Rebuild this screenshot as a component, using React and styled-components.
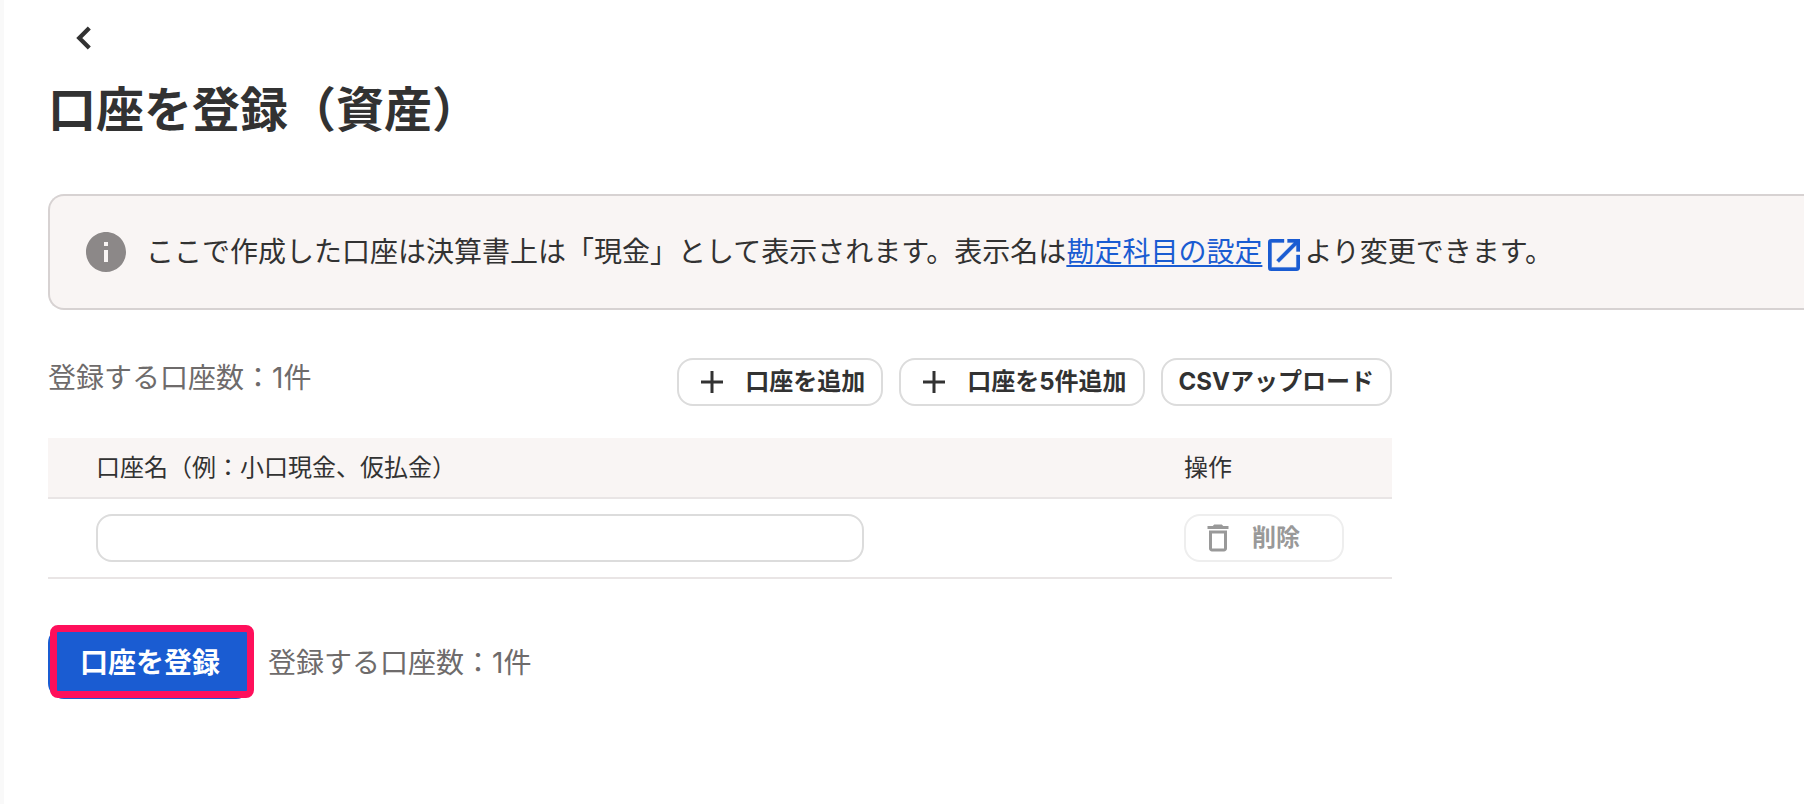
import styled, { createGlobalStyle } from "styled-components";

const COUNT_TEXT = "登録する口座数：1件";

const App = () => {
  return (
    <>
      <GlobalStyle />
      <Page>
        <BackButton type="button" aria-label="戻る">
          <ChevronIcon />
        </BackButton>
        <Title>口座を登録（資産）</Title>
        <Notice>
          <InfoIcon />
          <NoticeText>
            ここで作成した口座は決算書上は「現金」として表示されます。表示名は
            <NoticeLink href="#settings">勘定科目の設定</NoticeLink>
            <ExternalIcon />
            より変更できます。
          </NoticeText>
        </Notice>
        <Form onSubmit={(e) => e.preventDefault()}>
          <Toolbar>
            <CountText>{COUNT_TEXT}</CountText>
            <ButtonWrap>
              <OutlineButton type="button">
                <PlusIcon />
                口座を追加
              </OutlineButton>
              <OutlineButton type="button">
                <PlusIcon />
                口座を5件追加
              </OutlineButton>
              <OutlineButton type="button">CSVアップロード</OutlineButton>
            </ButtonWrap>
          </Toolbar>
          <AccountTable>
            <thead>
              <tr>
                <HeadCell id="account-name">
                  口座名（例：小口現金、仮払金）
                </HeadCell>
                <HeadCell $action>操作</HeadCell>
              </tr>
            </thead>
            <tbody>
              <tr>
                <BodyCell>
                  <NameInput type="text" aria-labelledby="account-name" />
                </BodyCell>
                <BodyCell $action>
                  <DeleteButton type="button" disabled>
                    <TrashIcon />
                    削除
                  </DeleteButton>
                </BodyCell>
              </tr>
            </tbody>
          </AccountTable>
          <Footer>
            <SubmitButton type="submit">口座を登録</SubmitButton>
            <CountText>{COUNT_TEXT}</CountText>
          </Footer>
        </Form>
      </Page>
    </>
  );
};

export default App;

const ChevronIcon = () => (
  <svg width="48" height="48" viewBox="0 0 48 48" aria-hidden="true">
    <path
      d="M29.300 14 19.300 24l10 10"
      fill="none"
      stroke="currentColor"
      strokeWidth="4.300"
    />
  </svg>
);

const InfoIcon = () => (
  <NoticeSvg width="48" height="48" viewBox="0 0 24 24" aria-hidden="true">
    <path
      fill="currentColor"
      d="M12 2C6.48 2 2 6.48 2 12s4.48 10 10 10 10-4.48 10-10S17.52 2 12 2zm1 15h-2v-6h2v6zm0-8h-2V7h2v2z"
    />
  </NoticeSvg>
);

const ExternalIcon = () => (
  <LinkSvg width="32" height="32" viewBox="3 3 18 18" aria-hidden="true">
    <path
      fill="currentColor"
      stroke="currentColor"
      strokeWidth="0.200"
      d="M19 19H5V5h7V3H5a2 2 0 0 0-2 2v14a2 2 0 0 0 2 2h14c1.100 0 2-.9 2-2v-7h-2v7zM14 3v2h3.590l-9.830 9.830 1.410 1.410L19 6.410V10h2V3h-7z"
    />
  </LinkSvg>
);

const PlusIcon = () => (
  <svg width="34" height="34" viewBox="0 0 34 34" aria-hidden="true">
    <path d="M17 6v22M6 17h22" stroke="currentColor" strokeWidth="3" />
  </svg>
);

const TrashIcon = () => (
  <svg width="36" height="36" viewBox="0 0 24 24" aria-hidden="true">
    <path
      fill="currentColor"
      d="M6 19c0 1.100.9 2 2 2h8c1.100 0 2-.9 2-2V7H6v12zM8 9h8v10H8V9zm7.500-5-1-1h-5l-1 1H5v2h14V4z"
    />
  </svg>
);

const GlobalStyle = createGlobalStyle`
  * {
    box-sizing: border-box;
  }

  body {
    margin: 0;
    background: #ffffff;
    color: #323232;
    font-family: Inter, "Noto Sans CJK JP", sans-serif;
    font-size: 28px;
    line-height: 40px;
  }

  button,
  input {
    font-family: inherit;
  }
`;

const Page = styled.main`
  min-height: 100vh;
  padding: 8px 0 48px 48px;
  box-shadow: inset 4px 0 0 #f9f9f9;
`;

const BackButton = styled.button`
  display: flex;
  margin-left: 12px;
  padding: 6px 0;
  border: none;
  background: none;
  color: #323232;
`;

const Title = styled.h1`
  margin: 8px 0 50px;
  font-size: 48px;
  font-weight: 700;
  line-height: 68px;
`;

const Notice = styled.div`
  display: flex;
  align-items: center;
  gap: 16px;
  padding: 32px;
  border: 2px solid #d7d2d2;
  border-right: none;
  border-radius: 16px 0 0 16px;
  background: #f9f5f4;
`;

const NoticeSvg = styled.svg`
  flex: none;
  color: #8c8888;
`;

const NoticeText = styled.p`
  margin: 0;
`;

const NoticeLink = styled.a`
  color: #1a5cd2;
  text-decoration: underline;
  text-decoration-thickness: 2px;
  text-underline-offset: 3px;
`;

const LinkSvg = styled.svg`
  margin: 0 4px 0 6px;
  color: #1a5cd2;
  vertical-align: -9px;
`;

const Form = styled.form`
  max-width: 1344px;
  margin-top: 48px;
`;

const Toolbar = styled.div`
  display: flex;
  justify-content: space-between;
  align-items: flex-start;
  margin-bottom: 32px;
`;

const CountText = styled.p`
  margin: 0;
  color: #6e6b6b;
`;

const ButtonWrap = styled.div`
  display: flex;
  gap: 16px;
`;

const OutlineButton = styled.button`
  display: flex;
  align-items: center;
  gap: 16px;
  height: 48px;
  padding: 0 16px;
  border: 2px solid #dcdcdc;
  border-radius: 16px;
  background: #ffffff;
  color: #323232;
  font-size: 24px;
  font-weight: 700;
  line-height: 32px;
`;

const DeleteButton = styled(OutlineButton)`
  width: 160px;
  padding: 0 14px;
  border-color: #eeeeee;
  color: #999999;
`;

const AccountTable = styled.table`
  width: 100%;
  border-collapse: separate;
  border-spacing: 0;
  table-layout: fixed;
`;

const HeadCell = styled.th`
  width: ${(props) => (props.$action ? "208px" : "auto")};
  height: 61px;
  padding: ${(props) => (props.$action ? "0" : "0 0 0 48px")};
  border-bottom: 2px solid #e9e5e5;
  background: #f9f5f4;
  font-size: 24px;
  font-weight: 400;
  text-align: left;
`;

const BodyCell = styled.td`
  height: 80px;
  padding: ${(props) => (props.$action ? "0" : "0 0 0 48px")};
  border-bottom: 2px solid #e9e5e5;
`;

const NameInput = styled.input`
  display: block;
  width: 768px;
  max-width: 100%;
  height: 48px;
  padding: 0 16px;
  border: 2px solid #dcdcdc;
  border-radius: 16px;
  font-size: 24px;
`;

const Footer = styled.div`
  display: flex;
  align-items: center;
  gap: 16px;
  margin-top: 48px;
`;

const SubmitButton = styled.button`
  position: relative;
  height: 72px;
  padding: 0 32px;
  border: none;
  border-radius: 16px;
  background: #1a5cd2;
  color: #ffffff;
  font-size: 28px;
  font-weight: 700;
  line-height: 40px;

  &::after {
    content: "";
    position: absolute;
    top: -2px;
    right: -2px;
    bottom: 1px;
    left: 2px;
    border: 7px solid #ff0f5b;
    border-radius: 8px;
  }
`;
